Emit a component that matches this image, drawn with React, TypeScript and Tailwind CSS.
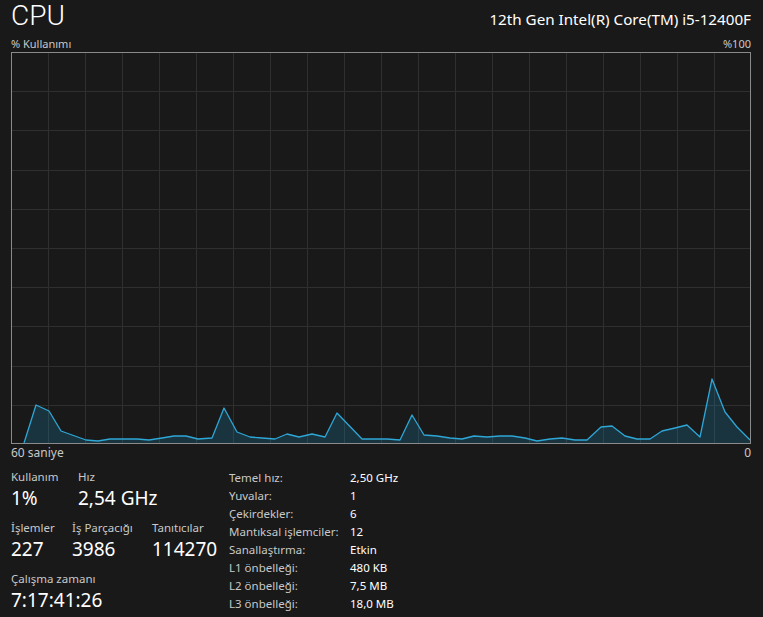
import { useMemo } from 'react'

// CPU usage samples, in page coordinates (chart spans x 12..750, y 53..443)
const POINTS: [number, number][] = [
  [24, 443], [36, 405], [49, 411], [61, 431], [86, 440], [98, 441], [110, 439], [123, 439],
  [137, 439], [149, 440], [162, 438], [174, 436], [186, 436], [198, 439], [212, 438], [224, 408],
  [237, 432], [250, 437], [262, 438], [275, 439], [287, 434], [299, 437], [312, 434], [325, 437],
  [337, 413], [362, 439], [375, 439], [387, 439], [400, 440], [412, 415], [424, 435], [437, 436],
  [450, 438], [462, 439], [474, 436], [487, 437], [500, 436], [512, 436], [525, 438], [537, 441],
  [550, 439], [562, 438], [575, 440], [587, 440], [601, 427], [612, 426], [625, 436], [637, 439],
  [650, 439], [662, 431], [675, 428], [687, 425], [700, 437], [712, 379], [725, 412], [737, 427],
  [750, 440]
]

const SPECS: [string, string][] = [
  ['Temel hız:', '2,50 GHz'],
  ['Yuvalar:', '1'],
  ['Çekirdekler:', '6'],
  ['Mantıksal işlemciler:', '12'],
  ['Sanallaştırma:', 'Etkin'],
  ['L1 önbelleği:', '480 KB'],
  ['L2 önbelleği:', '7,5 MB'],
  ['L3 önbelleği:', '18,0 MB']
]

function UsageChart(): JSX.Element {
  const line = useMemo(() => POINTS.map(([x, y]) => `${x},${y}`).join(' '), [])
  const area = `${line} 750,443 24,443`
  return (
    <div className="w-[740px] h-[392px] border border-[#8a8a8a]">
      <svg width="738" height="390" viewBox="12 53 738 390" className="block">
        {Array.from({ length: 19 }, (_, k) => (
          <line key={`v${k}`} x1={11.5 + (k + 1) * 37} x2={11.5 + (k + 1) * 37} y1="53" y2="443" stroke="#2f2f2f" strokeWidth="1" />
        ))}
        {Array.from({ length: 9 }, (_, k) => (
          <line key={`h${k}`} x1="12" x2="750" y1={Math.round(52 + (k + 1) * 39.2) + 0.5} y2={Math.round(52 + (k + 1) * 39.2) + 0.5} stroke="#2f2f2f" strokeWidth="1" />
        ))}
        <polygon points={area} fill="#17a0d0" fillOpacity="0.2" />
        <polyline points={line} fill="none" stroke="#2ea6d6" strokeWidth="1.3" strokeLinejoin="round" />
      </svg>
    </div>
  )
}

function Stat({ label, value, className = '' }: { label: string; value: string; className?: string }): JSX.Element {
  return (
    <div className={`flex flex-col ${className}`}>
      <span className="text-[11.5px] leading-[16px] text-[#c8c8c8]">{label}</span>
      <span className="text-[19px] leading-[26px] text-white">{value}</span>
    </div>
  )
}

export default function App(): JSX.Element {
  return (
    <div className="w-[763px] h-[617px] overflow-hidden bg-[#191919] text-white pl-[11px]"
      style={{ fontFamily: '"Segoe UI", "Noto Sans", sans-serif' }}>
      {/* header */}
      <div className="w-[740px] h-[36px] flex items-baseline justify-between">
        <span className="text-[28px] leading-[32px] font-light font-[Roboto,'Noto_Sans',sans-serif]">CPU</span>
        <span className="text-[15.2px] leading-[20px]">12th Gen Intel(R) Core(TM) i5-12400F</span>
      </div>
      <div className="w-[740px] h-[16px] flex items-center justify-between text-[11px] text-[#c8c8c8]">
        <span>% Kullanımı</span>
        <span>%100</span>
      </div>
      <UsageChart />
      <div className="w-[740px] h-[18px] flex items-center justify-between text-[12px] text-[#c8c8c8]">
        <span>60 saniye</span>
        <span>0</span>
      </div>

      {/* stats */}
      <div className="flex mt-[7px]">
        <div className="w-[218px] flex flex-col gap-[9px]">
          <div className="flex">
            <Stat label="Kullanım" value="1%" className="w-[67px]" />
            <Stat label="Hız" value="2,54 GHz" />
          </div>
          <div className="flex">
            <Stat label="İşlemler" value="227" className="w-[61px]" />
            <Stat label="İş Parçacığı" value="3986" className="w-[80px]" />
            <Stat label="Tanıtıcılar" value="114270" />
          </div>
          <Stat label="Çalışma zamanı" value="7:17:41:26" />
        </div>
        <div className="flex flex-col text-[11.5px] leading-[18px]">
          {SPECS.map(([k, v]) => (
            <div key={k} className="flex">
              <span className="w-[121px] text-[#c8c8c8]">{k}</span>
              <span className="text-white">{v}</span>
            </div>
          ))}
        </div>
      </div>
    </div>
  )
}
